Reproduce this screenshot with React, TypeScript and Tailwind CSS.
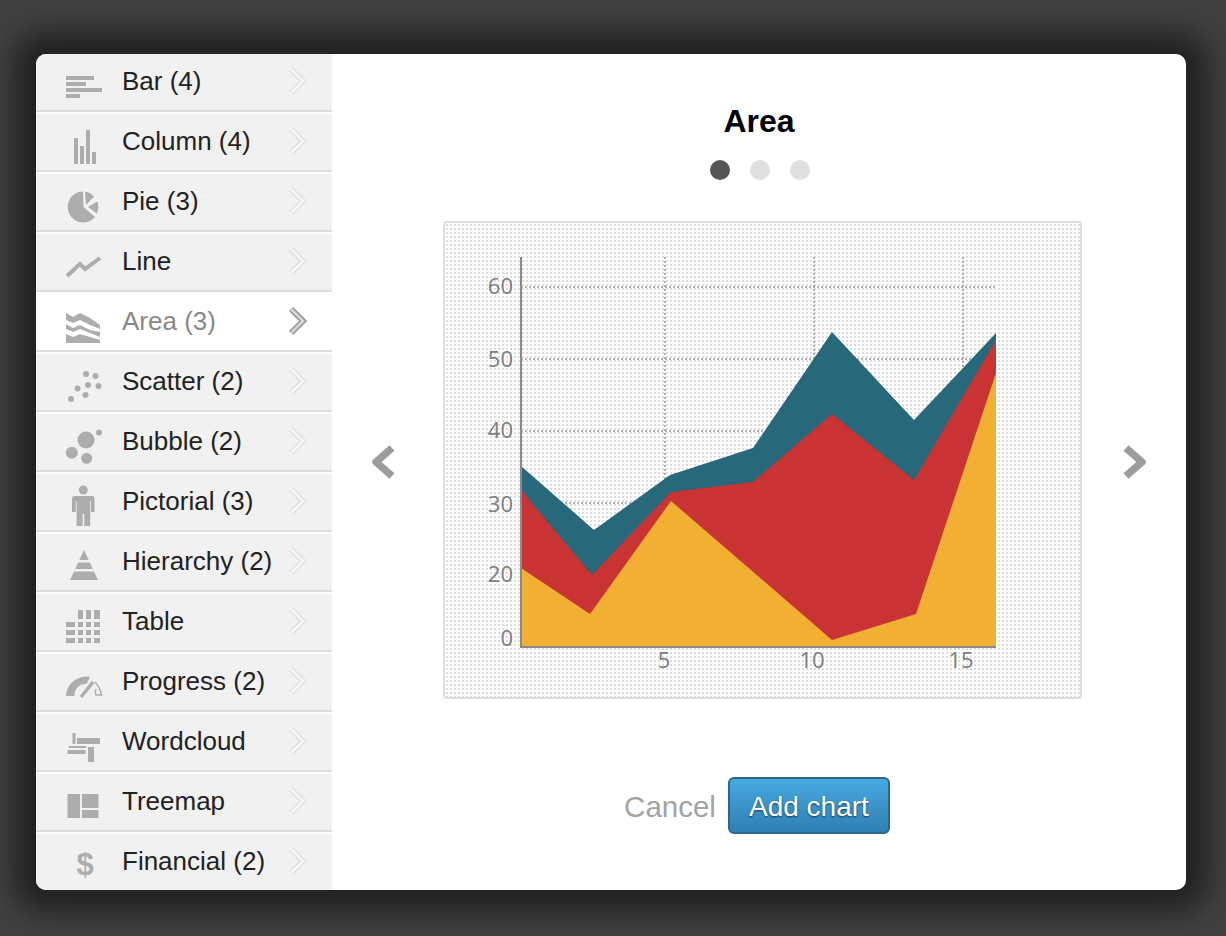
import type { ReactNode } from 'react';

const GRAY = '#adadad';

// row icons are drawn on a 40x56 box, the full height of a row
const icons: Record<string, ReactNode> = {
  bar: (
    <g fill={GRAY}>
      <rect x="2" y="22" width="28" height="4" />
      <rect x="2" y="28" width="20" height="4" />
      <rect x="2" y="34" width="36" height="4" />
      <rect x="2" y="40" width="14" height="4" />
    </g>
  ),
  column: (
    <g fill={GRAY}>
      <rect x="10" y="24" width="4" height="26" />
      <rect x="16" y="32" width="4" height="18" />
      <rect x="22" y="16" width="4" height="34" />
      <rect x="28" y="38" width="4" height="12" />
    </g>
  ),
  pie: (
    <g fill={GRAY}>
      <path d="M19 17.5 A15.5 15.5 0 1 0 31 43 L19.5 33 Z" />
      <path d="M21 17.5 A15.5 15.5 0 0 1 30 22.5 L22 31 Z" />
      <path d="M24 33 L33.2 27.5 A15.5 15.5 0 0 1 32.8 39.5 Z" />
    </g>
  ),
  line: <polyline points="3,42 16,30 21,35 36,24" fill="none" stroke={GRAY} strokeWidth="4" />,
  area: (
    <g fill={GRAY}>
      <path d="M2 19 L9 23 L16 19 L26 24 L36 31 V35 L26 31 L16 26 L9 29 L2 26 Z" />
      <path d="M2 30 L9 34 L16 31 L26 36 L36 38 V43 L26 39 L16 35 L9 38 L2 35 Z" />
      <path d="M2 40 L9 43 L16 40 L26 43 L36 46 V49 H2 Z" />
    </g>
  ),
  scatter: (
    <g fill={GRAY}>
      <circle cx="22" cy="20" r="3" />
      <circle cx="31.5" cy="22" r="3" />
      <circle cx="24" cy="31" r="3" />
      <circle cx="34.5" cy="32" r="3" />
      <circle cx="13.5" cy="34.5" r="3" />
      <circle cx="21.5" cy="41" r="3" />
      <circle cx="7" cy="45" r="3" />
    </g>
  ),
  bubble: (
    <g fill={GRAY}>
      <circle cx="22" cy="26" r="8.5" />
      <circle cx="35" cy="18.5" r="3" />
      <circle cx="7.8" cy="38.7" r="6" />
      <circle cx="22.7" cy="44.3" r="5.5" />
    </g>
  ),
  pictorial: (
    <g fill={GRAY}>
      <circle cx="19.3" cy="16" r="4.5" />
      <path d="M10.5 22 H28 Q30.5 22 30.5 25 V38 H27 V27 H26.2 V52 H20.2 V40 H18.6 V52 H12.6 V27 H11.8 V38 H8 V25 Q8 22 10.5 22 Z" />
    </g>
  ),
  hierarchy: (
    <g fill={GRAY}>
      <polygon points="20,16 24.7,26 15.3,26" />
      <polygon points="14.2,28.5 25.8,28.5 28.9,35 11.1,35" />
      <polygon points="10,37.5 30,37.5 34,46 6,46" />
    </g>
  ),
  table: (
    <g fill={GRAY}>
      <rect x="14" y="16" width="5" height="9" />
      <rect x="22" y="16" width="5" height="9" />
      <rect x="30" y="16" width="6" height="9" />
      {[28, 36, 44].map((y) => (
        <g key={y}>
          <rect x="2" y={y} width="9" height="5" />
          <rect x="14" y={y} width="5" height="5" />
          <rect x="22" y={y} width="5" height="5" />
          <rect x="30" y={y} width="6" height="5" />
        </g>
      ))}
    </g>
  ),
  progress: (
    <g>
      <path d="M2 42 A20 20 0 0 1 26 23 L22.5 30 A11 11 0 0 0 10.5 42 Z" fill={GRAY} />
      <line x1="17" y1="43" x2="29" y2="28" stroke={GRAY} strokeWidth="3.5" />
      <path d="M31 28 Q36 33 37.5 41 H32 Q30.5 38 32 35" fill="none" stroke={GRAY} strokeWidth="1.5" />
    </g>
  ),
  wordcloud: (
    <g fill={GRAY}>
      <rect x="8.5" y="19" width="3" height="11" />
      <rect x="13" y="24" width="23" height="6" />
      <rect x="5" y="32" width="17" height="2" />
      <rect x="3.5" y="36" width="18" height="4" />
      <rect x="24" y="33" width="6" height="15" />
    </g>
  ),
  treemap: (
    <g fill={GRAY}>
      <rect x="3.5" y="20" width="12.5" height="24" />
      <rect x="18" y="20" width="16.5" height="14" />
      <rect x="18" y="36" width="16.5" height="8" />
    </g>
  ),
  financial: (
    <text x="21" y="41" textAnchor="middle" fill={GRAY} fontSize="31" fontWeight="700" fontFamily="'Liberation Sans', sans-serif">
      $
    </text>
  ),
};

const rows = [
  { label: 'Bar (4)', icon: 'bar' },
  { label: 'Column (4)', icon: 'column' },
  { label: 'Pie (3)', icon: 'pie' },
  { label: 'Line', icon: 'line' },
  { label: 'Area (3)', icon: 'area', active: true },
  { label: 'Scatter (2)', icon: 'scatter' },
  { label: 'Bubble (2)', icon: 'bubble' },
  { label: 'Pictorial (3)', icon: 'pictorial' },
  { label: 'Hierarchy (2)', icon: 'hierarchy' },
  { label: 'Table', icon: 'table' },
  { label: 'Progress (2)', icon: 'progress' },
  { label: 'Wordcloud', icon: 'wordcloud' },
  { label: 'Treemap', icon: 'treemap' },
  { label: 'Financial (2)', icon: 'financial' },
];

function RowChevron({ active }: { active?: boolean }) {
  return (
    <svg width="24" height="32" viewBox="0 0 24 32" className="mb-[3px] shrink-0">
      <polyline points="6,4 18,16 6,28" fill="none" stroke={active ? '#9a9a9a' : '#d9d9d9'} strokeWidth={active ? 6 : 5} />
      <polyline points="6,4 18,16 6,28" fill="none" stroke={active ? '#d6d6d6' : '#f6f6f6'} strokeWidth={active ? 2.5 : 3} />
    </svg>
  );
}

function SideRow({ label, icon, active }: { label: string; icon: string; active?: boolean }) {
  return (
    <div
      className={`flex h-[58px] mb-[2px] items-center border-b-2 border-[#dcdcdc] pl-[28px] pr-[23px] ${
        active ? 'bg-white text-[#888888]' : 'bg-[#f1f1f1] text-[#222222]'
      }`}
    >
      <svg width="40" height="56" viewBox="0 0 40 56" className="shrink-0">
        {icons[icon]}
      </svg>
      <span className="ml-[18px] flex-1 pb-[2px] text-[26px] leading-none whitespace-nowrap">{label}</span>
      <RowChevron active={active} />
    </div>
  );
}

function AreaChart() {
  const grid = 'M521 287H997M521 359H997M521 431H997M521 503H997M665 257V647M814 257V647M963 257V647';
  const yLabels = [
    { t: '60', y: 294 },
    { t: '50', y: 367 },
    { t: '40', y: 438 },
    { t: '30', y: 512 },
    { t: '20', y: 582 },
    { t: '0', y: 646 },
  ];
  const xLabels = [
    { t: '5', x: 664 },
    { t: '10', x: 812 },
    { t: '15', x: 961 },
  ];
  return (
    <svg width="635" height="474" viewBox="445 223 635 474" className="block">
      <path d={grid} fill="none" stroke="#9a9a9a" strokeWidth="1.5" strokeDasharray="2 2" />
      <polygon fill="#27687a" points="521,466 594,530 670,475 753,448 832,332 914,420 996,333 996,647 521,647" />
      <polygon fill="#c93333" points="521,490 592,575 671,492 753,482 832,414 914,480 996,340 996,647 521,647" />
      <polygon fill="#f2b032" points="521,568 590,614 671,501 832,640 916,614 996,373 996,647 521,647" />
      <path d="M521 257V647H996" fill="none" stroke="#8a8a8a" strokeWidth="2" />
      <g fill="#7d7d7d" fontSize="22" fontFamily="'Open Sans', sans-serif">
        {yLabels.map((l) => (
          <text key={l.t} x="513" y={l.y} textAnchor="end">
            {l.t}
          </text>
        ))}
        {xLabels.map((l) => (
          <text key={l.t} x={l.x} y="668" textAnchor="middle">
            {l.t}
          </text>
        ))}
      </g>
    </svg>
  );
}

function BigArrow({ dir }: { dir: 'left' | 'right' }) {
  const points = dir === 'left' ? '20,4 4,18 20,32' : '4,4 20,18 4,32';
  return (
    <svg width="26" height="36" viewBox="0 0 26 36" className="mt-[4px] shrink-0">
      <polyline points={points} fill="none" stroke="#9c9c9c" strokeWidth="7.5" strokeLinejoin="round" />
    </svg>
  );
}

export default function App() {
  return (
    <div className="h-[936px] overflow-hidden bg-[#414141] pl-[36px] pt-[54px] font-['Liberation_Sans',sans-serif]">
      <div className="flex h-[836px] w-[1150px] overflow-hidden rounded-[10px] bg-white shadow-[0_0_30px_22px_rgba(0,0,0,0.5)]">
        {/* Sidebar */}
        <div className="w-[296px] shrink-0">
          {rows.map((r) => (
            <SideRow key={r.label} label={r.label} icon={r.icon} active={r.active} />
          ))}
        </div>

        {/* Preview */}
        <div className="flex flex-1 flex-col items-center pt-[48px]">
          <h2 className="h-[38px] text-[32px] leading-[38px] font-bold text-black">Area</h2>
          <div className="mt-[20px] ml-[2px] flex gap-[20px]">
            <span className="h-[20px] w-[20px] rounded-full bg-[#555555]" />
            <span className="h-[20px] w-[20px] rounded-full bg-[#e0e0e0]" />
            <span className="h-[20px] w-[20px] rounded-full bg-[#e0e0e0]" />
          </div>

          <div className="mt-[41px] ml-[2px] flex items-center">
            <BigArrow dir="left" />
            <div className="ml-[45px] mr-[40px] h-[478px] w-[639px] rounded-[4px] border-2 border-[#dedede] bg-white bg-[radial-gradient(circle,#dcdcdc_0.8px,transparent_1.1px)] bg-[size:4px_4px]">
              <AreaChart />
            </div>
            <BigArrow dir="right" />
          </div>

          <div className="mt-[78px] flex items-center gap-[12px] pr-[4px]">
            <span className="pt-[2px] text-[29.5px] leading-none text-[#a3a3a3]">Cancel</span>
            <button className="h-[57px] w-[162px] rounded-[6px] border-2 border-[#2f6585] bg-gradient-to-b from-[#46aae2] to-[#2f7fb3] pt-[2px] text-[28px] text-white [text-shadow:0_1px_2px_rgba(0,0,0,0.6)]">
              Add chart
            </button>
          </div>
        </div>
      </div>
    </div>
  );
}
